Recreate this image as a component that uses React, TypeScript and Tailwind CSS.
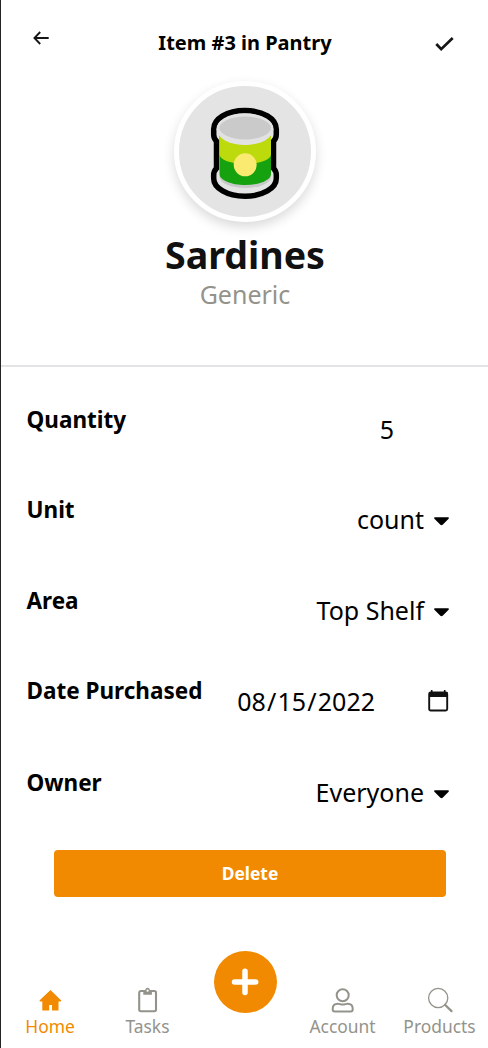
import React from "react";

type RowProps = { label: string; height: string; children: React.ReactNode };

function Row({ label, height, children }: RowProps) {
  return (
    <div className={`flex justify-between ${height}`}>
      <span className="text-[22.5px] leading-[34px] font-bold whitespace-nowrap">{label}</span>
      <div className="mt-[9px] flex h-[34px] items-center text-[25px] leading-[34px]">{children}</div>
    </div>
  );
}

function Caret() {
  return (
    <svg className="mt-[4px] ml-[10px] h-[9px] w-[15px]" viewBox="0 0 15 9">
      <path d="M1 .3h13c.9 0 1.2.9.6 1.5L8.6 7.7c-.7.6-1.5.6-2.2 0L.4 1.8C-.2 1.2.1.3 1 .3Z" />
    </svg>
  );
}

function Can() {
  return (
    <svg className="mt-[3px] h-[96px] w-[72px]" viewBox="209 105 72 96">
      <path d="M245 110.5c-18 0-31.3 8.300-31.300 18.500v5.500c0 3 .8 4.800 2.800 6.800v27c-2 2-2.800 4-2.800 7v3.200c0 9.500 13.300 17.800 31.300 17.800s31.300-8.300 31.300-17.800v-3.200c0-3-.8-5-2.800-7v-27c2-2 2.800-3.800 2.800-6.800V129c0-10.200-13.300-18.500-31.300-18.500Z" fill="#e4e4e4" stroke="#000" strokeWidth="5.500" />
      <ellipse cx="245.300" cy="176.500" rx="25.800" ry="11.500" fill="#c9c9c9" />
      <path d="M219.500 132h51.500v42c0 6-11.500 11-25.700 11s-25.800-5-25.800-11Z" fill="#15a20e" />
      <path d="M219.500 132h51.500v22.500c0 5-11.500 9.500-25.700 9.500s-25.800-4.500-25.800-9.500Z" fill="#bcda0c" />
      <ellipse cx="245" cy="129.300" rx="28.300" ry="15.700" fill="#e2e2e2" />
      <ellipse cx="245.200" cy="128" rx="25.800" ry="11.400" fill="#cacaca" />
      <circle cx="245.200" cy="164.800" r="11.500" fill="#fbea70" />
    </svg>
  );
}

type TabProps = { label: string; width: string; color?: string; children: React.ReactNode };

function Tab({ label, width, color = "text-[#94938b]", children }: TabProps) {
  return (
    <a className={`flex flex-col items-center ${width} ${color}`}>
      <svg className="h-[28px] w-[28px]" viewBox="0 0 28 28" fill="none" stroke="currentColor">
        {children}
      </svg>
      <span className="text-[17.4px] leading-[24px]">{label}</span>
    </a>
  );
}

export default function App() {
  return (
    <div className="flex h-[1048px] w-[488px] flex-col overflow-hidden border-l border-[#242424] bg-white font-['Noto_Sans',sans-serif] text-black">
      <header className="flex h-[81px] justify-between pr-[34px] pl-[32px]">
        <svg className="mt-[31px] h-[14px] w-[16px]" viewBox="0 0 16 14" fill="none" stroke="#151515" strokeWidth="1.800">
          <path d="M15.700 7H1.500M7.200 1 1.400 7l5.800 6" />
        </svg>
        <h1 className="mt-[28px] ml-[6px] text-[20px] leading-[30px] font-bold">Item #3 in Pantry</h1>
        <svg className="mt-[36px] h-[16px] w-[19px]" viewBox="0 0 19 16" fill="none" stroke="#151515" strokeWidth="2.700">
          <path d="m1.300 8 4.900 5.200L17.700 2" />
        </svg>
      </header>

      <section className="flex h-[286px] flex-col items-center border-b-2 border-[#e4e4e7]">
        <div className="flex h-[141px] w-[142px] items-center justify-center rounded-full border-[5px] border-white bg-[#e4e4e4] shadow-[0_5px_12px_rgba(0,0,0,0.15)]">
          <Can />
        </div>
        <h2 className="mt-[8px] pl-[1px] text-[37.600px] leading-[50px] font-bold text-[#111]">Sardines</h2>
        <p className="-mt-[3px] pl-[1px] text-[25px] leading-[34px] text-[#94938b]">Generic</p>
      </section>

      <main className="flex flex-col pt-[36px] pr-[39px] pl-[25.500px]">
        <Row label="Quantity" height="h-[90px]">
          <span className="mr-[55px]">5</span>
        </Row>
        <Row label="Unit" height="h-[91px]">count<Caret /></Row>
        <Row label="Area" height="h-[90px]">Top Shelf<Caret /></Row>
        <Row label="Date Purchased" height="h-[92px]">
          <span className="mt-[2px] flex gap-[1.200px]">
            <span>08</span>
            <span>/</span>
            <span>15</span>
            <span>/</span>
            <span>2022</span>
          </span>
          <svg className="mt-[2px] ml-[53px] h-[22px] w-[21px]" viewBox="0 0 21 22">
            <path d="M3.700 0v3M16.700 0v3" stroke="#111" strokeWidth="1.600" />
            <rect x="1.200" y="2.500" width="18" height="18" rx="1.500" fill="none" stroke="#111" strokeWidth="1.900" />
            <path d="M1 2h18.500v5H1Z" fill="#111" />
          </svg>
        </Row>
        <Row label="Owner" height="h-[84px]">Everyone<Caret /></Row>
      </main>

      <button className="ml-[53px] h-[47px] w-[392px] shrink-0 rounded-[4px] bg-[#f18a00] text-[17.400px] leading-[47px] font-bold text-white">
        Delete
      </button>

      <nav className="mt-auto flex h-[98px] shrink-0">
        <div className="flex pt-[36px]">
          <Tab label="Home" width="w-[98px]" color="text-[#f18a00]">
            <path d="M14.500 4 25 14.300q.8 1.200-.8 1.200h-1.700v9H16v-5.500h-2.800v5.500H6.300v-9H4.500q-1.600 0-.8-1.200Z" fill="currentColor" stroke="none" />
          </Tab>
          <Tab label="Tasks" width="w-[97px]">
            <rect x="5.200" y="5" width="16.800" height="20.200" rx="1.700" strokeWidth="2.100" />
            <path d="M9.300 5.200h1.800c0-4.500 5-4.500 5 0h1.800v3.600H9.300Z" fill="currentColor" stroke="none" />
            <circle cx="13.600" cy="4.700" r="1.100" fill="white" stroke="none" />
          </Tab>
        </div>
        <button className="mt-[1px] flex h-[62px] w-[98px] justify-center" aria-label="Add item">
          <svg className="h-[62px] w-[63px]" viewBox="0 0 63 62">
            <ellipse cx="31.500" cy="31" rx="31.500" ry="31" fill="#f18a00" />
            <path d="M31 20.300v21.200M20.500 31h21.200" stroke="white" strokeWidth="5.500" strokeLinecap="round" />
          </svg>
        </button>
        <div className="flex pt-[36px]">
          <Tab label="Account" width="w-[97px]">
            <circle cx="13.700" cy="9.200" r="6" strokeWidth="2" />
            <path d="M8.700 17.700c2 0 2.500.9 5 .9s3-.9 5-.9c3.300 0 5 2.300 5 5v.7q0 2-2 2h-16q-2 0-2-2v-.7c0-2.700 1.700-5 5-5Z" strokeWidth="2" />
          </Tab>
          <Tab label="Products" width="w-[97px]">
            <circle cx="12.200" cy="12" r="9.600" strokeWidth="1.300" />
            <path d="m19 18.700 6.500 6.400" strokeWidth="2.300" strokeLinecap="round" />
          </Tab>
        </div>
      </nav>
    </div>
  );
}
